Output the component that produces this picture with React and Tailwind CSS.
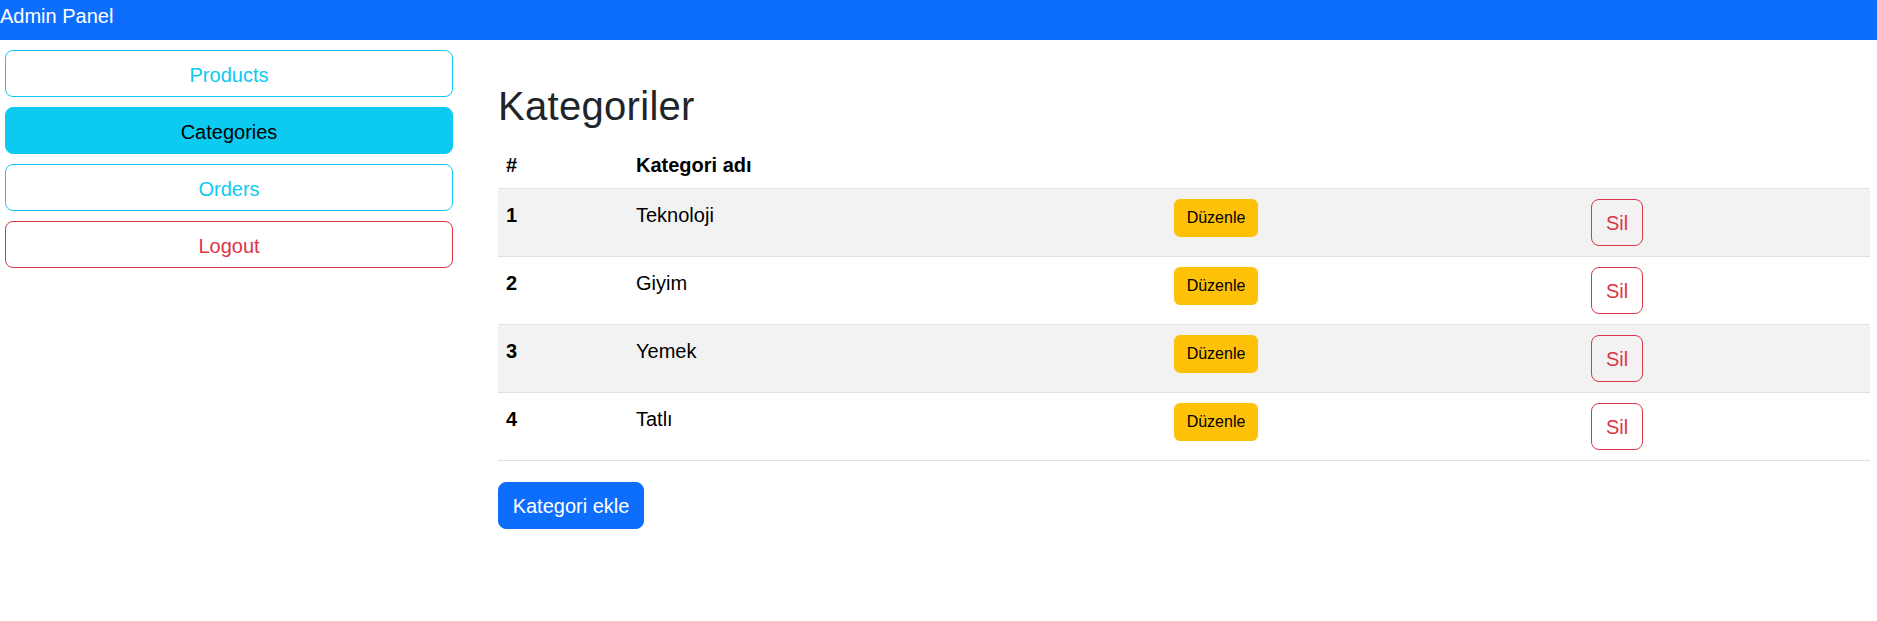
import React from 'react';

const categories = [
  { id: 1, name: 'Teknoloji' },
  { id: 2, name: 'Giyim' },
  { id: 3, name: 'Yemek' },
  { id: 4, name: 'Tatlı' },
];

const SideButton = ({ children, variant }) => {
  const styles = {
    outline: 'border-[#0dcaf0] text-[#0dcaf0] bg-white',
    active: 'border-[#0dcaf0] bg-[#0dcaf0] text-black',
    danger: 'border-[#dc3545] text-[#dc3545] bg-white',
  };
  return (
    <button
      className={`w-[448px] h-[47px] flex items-center justify-center pt-[2px] border rounded-[8px] text-[20px] leading-[30px] ${styles[variant]}`}
    >
      {children}
    </button>
  );
};

const App = () => {
  return (
    <div className="min-h-screen bg-white font-['Liberation_Sans',Arial,sans-serif]">
      {/* navbar */}
      <div className="h-[40px] bg-[#0d6efd] pt-[1px]">
        <span className="text-white text-[20px] leading-[30px]">Admin Panel</span>
      </div>

      <div className="flex">
        {/* sidebar */}
        <div className="w-[498px] shrink-0 pl-[5px] pt-[10px] flex flex-col gap-[10px]">
          <SideButton variant="outline">Products</SideButton>
          <SideButton variant="active">Categories</SideButton>
          <SideButton variant="outline">Orders</SideButton>
          <SideButton variant="danger">Logout</SideButton>
        </div>

        {/* content */}
        <div className="flex-1 pr-[7px] pt-[42px]">
          <h1 className="text-[40px] leading-[48px] font-medium text-[#212529] tracking-[0.3px]">Kategoriler</h1>

          <div className="mt-[12px] text-[20px] leading-[30px] text-black">
            <div className="grid grid-cols-[130px_538px_417px_1fr] h-[47px] pt-[8px] border-b border-[#dee2e6] font-bold">
              <div className="pl-[8px]">#</div>
              <div className="pl-[8px]">Kategori adı</div>
              <div />
              <div />
            </div>
            {categories.map((c, i) => (
              <div
                key={c.id}
                className={`grid grid-cols-[130px_538px_417px_1fr] items-start h-[68px] pt-[10px] border-b border-[#dee2e6] ${
                  i % 2 === 0 ? 'bg-[#f2f2f2]' : 'bg-white'
                }`}
              >
                <div className="pl-[8px] pt-[1px] font-bold">{c.id}</div>
                <div className="pl-[8px] pt-[1px]">{c.name}</div>
                <div className="pl-[8px]">
                  <button className="w-[84px] h-[38px] border border-[#ffc107] bg-[#ffc107] rounded-[6px] text-[16px] leading-[24px] text-black">
                    Düzenle
                  </button>
                </div>
                <div className="pl-[8px]">
                  <button className="w-[52px] h-[47px] border border-[#dc3545] rounded-[8px] text-[20px] leading-[30px] text-[#dc3545]">
                    Sil
                  </button>
                </div>
              </div>
            ))}
          </div>

          <button className="mt-[21px] w-[146px] h-[47px] bg-[#0d6efd] border border-[#0d6efd] rounded-[8px] text-white text-[20px] leading-[30px]">
            Kategori ekle
          </button>
        </div>
      </div>
    </div>
  );
};

export default App;
